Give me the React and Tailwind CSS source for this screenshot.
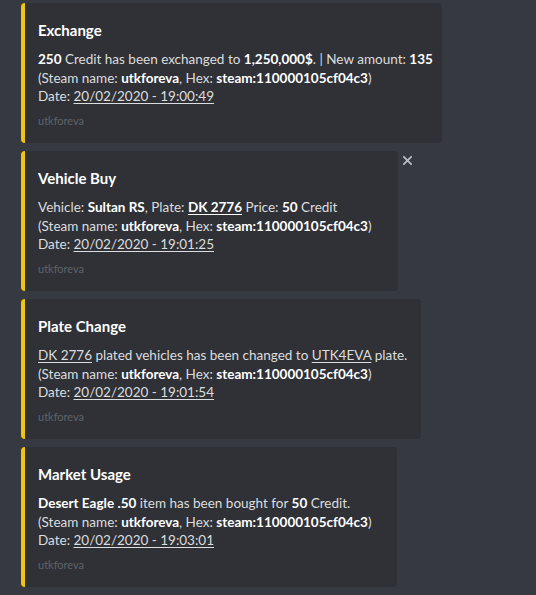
import React from "react";

const B = ({ children }) => <strong className="font-bold text-white">{children}</strong>;
const U = ({ children }) => <span className="underline underline-offset-2">{children}</span>;

function Embed({ width, title, children, date, close }) {
  return (
    <div className="relative" style={{ width }}>
      <div className="flex h-[140px] rounded-[4px] border-l-4 border-[#f1c40f] bg-[#2f3136] pl-[13px] pr-4 pt-[17px]">
        <div className="flex flex-col">
          <div className="h-5 text-[15px] font-bold leading-5 text-white">{title}</div>
          <div className="mt-[10px] text-[13.5px] leading-[18.5px] text-[#dcddde]">
            <div className="whitespace-nowrap">{children}</div>
            <div className="whitespace-nowrap">
              (Steam name: <B>utkforeva</B>, Hex: <B>steam:110000105cf04c3</B>)
            </div>
            <div className="whitespace-nowrap">
              Date: <U>{date}</U>
            </div>
          </div>
          <div className="mt-[7px] text-[11px] leading-4 text-[#5f636a]">utkforeva</div>
        </div>
      </div>
      {close && (
        <div className="absolute left-[calc(100%+1px)] top-[1px] flex h-4 w-4 items-center justify-center text-[#b9bbbe]">
          <svg width="11" height="11" viewBox="0 0 12 12" fill="none" stroke="currentColor" strokeWidth="2" strokeLinecap="round">
            <path d="M2 2 L10 10 M10 2 L2 10" />
          </svg>
        </div>
      )}
    </div>
  );
}

export default function App() {
  return (
    <div className="min-h-[595px] w-[536px] bg-[#36393f] pl-[21px] pt-[3px] font-['Lato',sans-serif]">
      <div className="flex flex-col gap-2">
        <Embed width={421} title="Exchange" date="20/02/2020 - 19:00:49">
          <B>250</B> Credit has been exchanged to <B>1,250,000$</B>. | New amount: <B>135</B>
        </Embed>
        <Embed width={377} title="Vehicle Buy" date="20/02/2020 - 19:01:25" close>
          Vehicle: <B>Sultan RS</B>, Plate: <B><U>DK 2776</U></B> Price: <B>50</B> Credit
        </Embed>
        <Embed width={400} title="Plate Change" date="20/02/2020 - 19:01:54">
          <U>DK 2776</U> plated vehicles has been changed to <U>UTK4EVA</U> plate.
        </Embed>
        <Embed width={376} title="Market Usage" date="20/02/2020 - 19:03:01">
          <B>Desert Eagle .50</B> item has been bought for <B>50</B> Credit.
        </Embed>
      </div>
    </div>
  );
}
